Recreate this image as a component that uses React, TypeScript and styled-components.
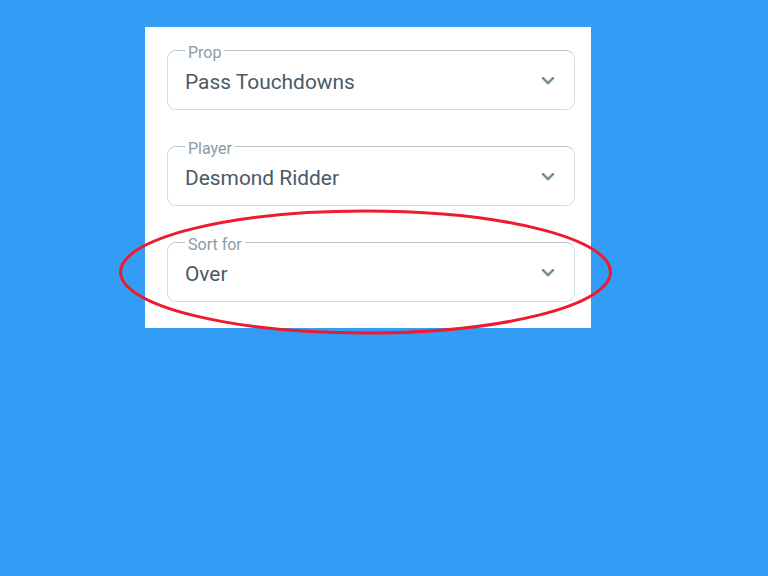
import React from "react";
import styled, { createGlobalStyle } from "styled-components";

const GlobalStyle = createGlobalStyle`
  html, body {
    margin: 0;
    padding: 0;
    background: #339cf4;
    font-family: Roboto, "Liberation Sans", Arial, sans-serif;
  }
`;

const Page = styled.div`
  width: 768px;
  height: 576px;
  padding: 27px 0 0 145px;
  box-sizing: border-box;
`;

const Card = styled.div`
  position: relative;
  width: 446px;
  box-sizing: border-box;
  background: #ffffff;
  padding: 10px 16px 3px 22px;
  display: flex;
  flex-direction: column;
`;

const Field = styled.fieldset`
  margin: 0 0 23px 0;
  padding: 0 19px 8px 17px;
  border: 1px solid #d3dadf;
  border-top-color: #b7c2c9;
  border-radius: 9px;
  min-width: 0;
`;

const Legend = styled.legend`
  margin-left: 0;
  padding: 6px 3px 0 3px;
  font-size: 16px;
  line-height: 20px;
  color: #8a9ba6;
`;

const Row = styled.div`
  height: 38px;
  display: flex;
  align-items: center;
  justify-content: space-between;
`;

const Value = styled.span`
  font-size: 20.9px;
  color: #4a5a66;
`;

const Chevron = styled.svg`
  width: 14px;
  height: 10px;
  color: #78909c;
  flex: none;
`;

const Highlight = styled.svg`
  position: absolute;
  left: -27px;
  top: 183px;
  overflow: visible;
  pointer-events: none;
`;

const fields = [
  { label: "Prop", value: "Pass Touchdowns" },
  { label: "Player", value: "Desmond Ridder" },
  { label: "Sort for", value: "Over" },
];

function Select({ label, value }: { label: string; value: string }) {
  return (
    <Field>
      <Legend>{label}</Legend>
      <Row>
        <Value>{value}</Value>
        <Chevron viewBox="0 0 14 10">
          <path d="M2 1.2 L7 6.2 L12 1.2" fill="none" stroke="currentColor" strokeWidth="2.6" strokeLinecap="round" strokeLinejoin="round" />
        </Chevron>
      </Row>
    </Field>
  );
}

export default function App() {
  return (
    <>
      <GlobalStyle />
      <Page>
        <Card>
          {fields.map((f) => (
            <Select key={f.label} label={f.label} value={f.value} />
          ))}
          <Highlight width="495" height="126" viewBox="0 0 495 126">
            <ellipse cx="247.5" cy="62" rx="245" ry="61" fill="none" stroke="#ee1b2e" strokeWidth="3" />
          </Highlight>
        </Card>
      </Page>
    </>
  );
}
